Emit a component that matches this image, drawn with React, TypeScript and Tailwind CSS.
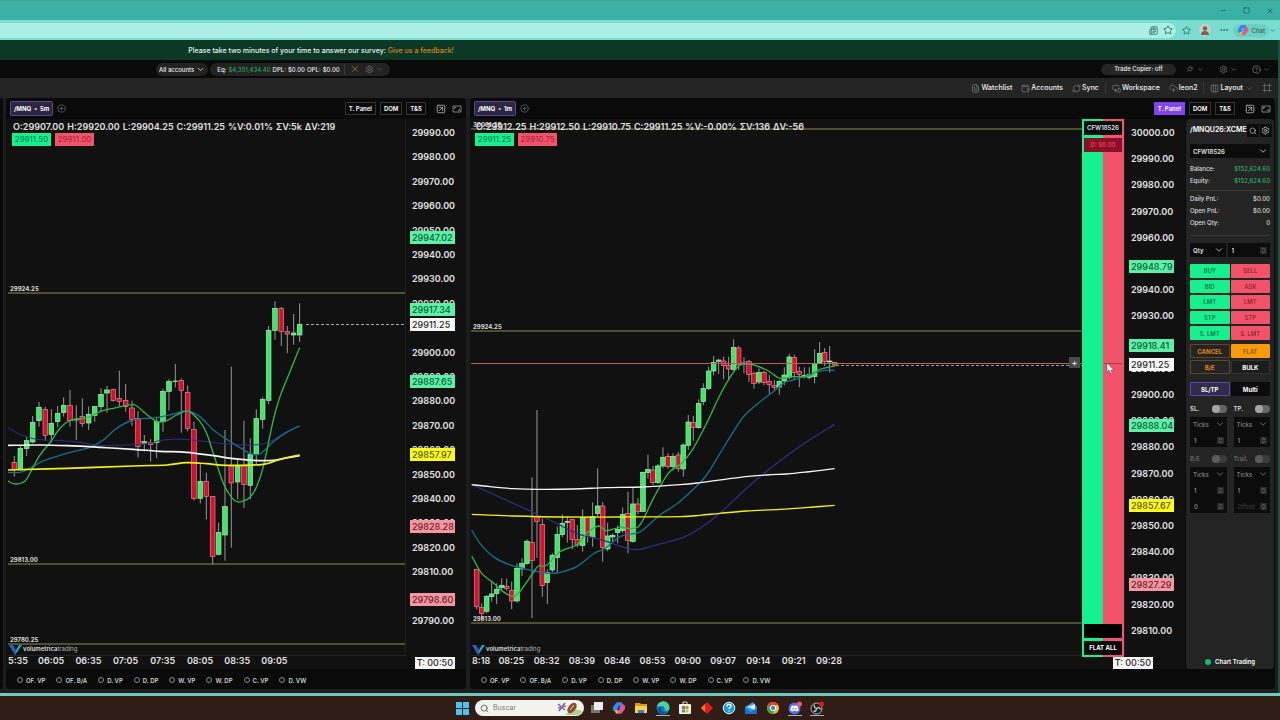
import type { ReactNode } from 'react';
import {
  ChevronDown,
  ChevronsUpDown,
  CircleHelp,
  CirclePlus,
  CloudUpload,
  Columns3,
  Ellipsis,
  FileText,
  Frame,
  Minus,
  MonitorSmartphone,
  Newspaper,
  Plug,
  RefreshCw,
  Search,
  Settings,
  Square,
  SquareArrowUpRight,
  Star,
  Wallet,
  X,
} from 'lucide-react';
import { FaDiscord } from 'react-icons/fa6';

// x, high, body top, body bottom, low, up (1) or down (0)
type Candle = [number, number, number, number, number, 0 | 1];
type Point = [number, number];
type Tag = { y: number; text: string; tone: keyof typeof tones };

const tones = {
  green: { fill: '#5df0a6', text: '#0b5c38' },
  white: { fill: '#f7f7f7', text: '#2a2a2a' },
  yellow: { fill: '#fbfb1c', text: '#55550a' },
  pink: { fill: '#f597a3', text: '#6e1a26' },
};

const candles5m: Candle[] = [
  [43, 528, 547, 569, 590, 0],
  [61, 498, 505, 569, 572, 1],
  [80, 470, 482, 506, 528, 1],
  [98, 408, 427, 486, 490, 1],
  [117, 366, 382, 422, 440, 1],
  [136, 380, 388, 466, 482, 0],
  [154, 388, 430, 464, 488, 1],
  [173, 378, 400, 425, 442, 1],
  [191, 352, 376, 398, 410, 1],
  [210, 330, 376, 422, 440, 0],
  [229, 376, 417, 420, 480, 1],
  [247, 355, 409, 431, 440, 0],
  [266, 380, 403, 429, 450, 1],
  [284, 378, 380, 406, 425, 1],
  [303, 325, 343, 380, 395, 1],
  [321, 318, 330, 339, 398, 1],
  [340, 326, 328, 361, 365, 0],
  [358, 272, 356, 364, 380, 0],
  [377, 312, 361, 380, 395, 0],
  [396, 362, 384, 418, 437, 0],
  [414, 394, 416, 499, 533, 0],
  [433, 465, 485, 491, 515, 1],
  [452, 478, 487, 493, 545, 0],
  [470, 410, 424, 488, 534, 1],
  [489, 326, 334, 425, 455, 1],
  [507, 298, 304, 334, 392, 1],
  [526, 252, 303, 305, 322, 1],
  [544, 296, 301, 331, 458, 0],
  [563, 316, 338, 445, 454, 0],
  [582, 425, 449, 655, 662, 0],
  [601, 550, 604, 655, 670, 1],
  [619, 578, 604, 649, 718, 0],
  [638, 649, 649, 829, 853, 0],
  [656, 728, 758, 823, 826, 1],
  [675, 450, 680, 765, 842, 1],
  [694, 260, 558, 609, 803, 0],
  [713, 538, 558, 606, 657, 1],
  [732, 422, 558, 613, 684, 0],
  [751, 475, 523, 616, 658, 1],
  [769, 388, 416, 523, 553, 1],
  [788, 352, 358, 418, 446, 1],
  [806, 138, 151, 361, 373, 1],
  [825, 64, 85, 151, 179, 1],
  [844, 81, 86, 154, 198, 0],
  [862, 138, 155, 162, 219, 0],
  [881, 102, 159, 165, 194, 1],
  [899, 70, 133, 165, 186, 1],
];

const candles1m: Candle[] = [
  [50, 748, 748, 860, 868, 0],
  [65, 850, 862, 880, 904, 0],
  [80, 825, 829, 874, 880, 1],
  [95, 785, 822, 830, 845, 1],
  [110, 790, 808, 821, 852, 1],
  [125, 775, 796, 803, 812, 1],
  [140, 776, 799, 806, 812, 0],
  [155, 785, 811, 843, 868, 0],
  [171, 730, 745, 843, 848, 1],
  [186, 715, 730, 747, 768, 1],
  [201, 658, 664, 731, 734, 1],
  [216, 472, 668, 721, 894, 0],
  [231, 270, 590, 604, 714, 0],
  [247, 595, 613, 797, 830, 0],
  [262, 748, 757, 788, 852, 1],
  [277, 700, 706, 750, 757, 1],
  [292, 620, 644, 713, 756, 1],
  [307, 583, 610, 644, 652, 1],
  [322, 590, 604, 607, 668, 1],
  [337, 598, 599, 658, 687, 0],
  [352, 615, 659, 675, 682, 0],
  [368, 568, 592, 677, 695, 1],
  [383, 588, 593, 648, 668, 0],
  [398, 547, 590, 653, 680, 1],
  [413, 445, 558, 581, 590, 1],
  [428, 547, 558, 683, 725, 0],
  [443, 608, 648, 687, 694, 1],
  [458, 640, 646, 651, 668, 1],
  [473, 616, 628, 638, 670, 1],
  [488, 563, 583, 632, 638, 1],
  [504, 515, 581, 661, 700, 0],
  [519, 502, 552, 664, 668, 1],
  [534, 535, 552, 574, 583, 0],
  [549, 455, 457, 574, 576, 1],
  [564, 404, 448, 458, 476, 1],
  [579, 438, 450, 488, 495, 0],
  [594, 432, 438, 488, 492, 1],
  [609, 382, 412, 438, 445, 1],
  [624, 400, 409, 440, 446, 0],
  [639, 400, 409, 440, 452, 1],
  [655, 396, 405, 446, 455, 0],
  [670, 370, 375, 447, 470, 1],
  [685, 285, 306, 376, 390, 1],
  [700, 288, 307, 323, 362, 0],
  [716, 238, 250, 323, 326, 1],
  [730, 190, 206, 245, 256, 1],
  [746, 140, 153, 205, 210, 1],
  [761, 108, 127, 153, 165, 1],
  [776, 118, 120, 124, 162, 1],
  [791, 110, 123, 136, 178, 0],
  [806, 110, 136, 147, 182, 0],
  [821, 58, 82, 149, 152, 1],
  [836, 78, 84, 135, 150, 0],
  [852, 112, 129, 132, 160, 1],
  [867, 120, 124, 163, 186, 0],
  [882, 155, 160, 190, 206, 0],
  [897, 145, 158, 186, 192, 1],
  [912, 152, 157, 187, 196, 0],
  [928, 165, 184, 194, 225, 0],
  [943, 180, 196, 202, 210, 0],
  [958, 180, 184, 201, 224, 1],
  [973, 142, 165, 183, 196, 1],
  [988, 102, 111, 172, 178, 1],
  [1003, 104, 112, 157, 178, 0],
  [1018, 140, 154, 163, 202, 0],
  [1033, 142, 166, 170, 176, 1],
  [1048, 142, 164, 172, 178, 1],
  [1064, 88, 130, 170, 190, 1],
  [1079, 66, 100, 129, 132, 1],
  [1094, 84, 98, 124, 138, 0],
  [1109, 78, 123, 126, 158, 1],
  [1124, 126, 127, 135, 140, 0],
];

type Series = { color: string; width: number; points: Point[] };

const series5m: Series[] = [
  { color: '#302d85', width: 3, points: [[24, 443], [60, 463], [110, 478], [180, 482], [240, 487], [300, 496], [380, 495], [440, 491], [490, 480], [550, 478], [620, 485], [680, 492], [760, 495], [810, 485], [860, 455], [899, 437]] },
  { color: '#15718a', width: 4, points: [[24, 577], [60, 577], [95, 562], [130, 543], [200, 520], [270, 502], [310, 480], [350, 445], [400, 420], [470, 413], [520, 402], [560, 393], [600, 410], [640, 450], [680, 478], [720, 503], [750, 520], [780, 522], [820, 485], [860, 457], [899, 438]] },
  { color: '#2fb84a', width: 4, points: [[24, 603], [45, 612], [75, 603], [95, 570], [120, 525], [150, 488], [180, 445], [210, 422], [265, 412], [300, 395], [340, 385], [400, 374], [430, 395], [470, 425], [500, 422], [530, 405], [565, 393], [600, 425], [620, 460], [640, 520], [670, 610], [695, 653], [713, 666], [730, 663], [750, 652], [770, 620], [790, 560], [820, 420], [840, 350], [870, 275], [899, 203]] },
  { color: '#f5f5f5', width: 5, points: [[24, 496], [120, 495], [200, 497], [300, 502], [400, 508], [480, 514], [560, 517], [640, 527], [700, 536], [760, 541], [820, 541], [860, 534], [899, 527]] },
  { color: '#f4f410', width: 5, points: [[24, 570], [200, 565], [400, 558], [500, 555], [560, 548], [620, 551], [680, 556], [790, 553], [840, 538], [899, 525]] },
];

const series1m: Series[] = [
  { color: '#302d78', width: 4, points: [[35, 494], [120, 532], [215, 575], [280, 605], [350, 640], [430, 661], [500, 685], [540, 688], [580, 677], [670, 652], [720, 625], [780, 580], [860, 505], [940, 438], [1030, 372], [1124, 313]] },
  { color: '#15718a', width: 4, points: [[35, 630], [60, 670], [100, 710], [150, 735], [210, 750], [270, 760], [300, 757], [350, 740], [400, 702], [440, 682], [480, 650], [535, 638], [560, 620], [600, 585], [650, 552], [700, 508], [740, 465], [780, 400], [830, 320], [855, 285], [900, 245], [940, 215], [970, 190], [1000, 180], [1040, 168], [1065, 157], [1095, 151], [1124, 151]] },
  { color: '#2fb84a', width: 4, points: [[35, 708], [65, 760], [100, 788], [125, 812], [155, 828], [175, 820], [215, 765], [235, 738], [260, 736], [300, 695], [350, 675], [380, 640], [415, 618], [440, 632], [480, 622], [535, 620], [580, 535], [625, 460], [665, 430], [700, 385], [740, 310], [780, 225], [815, 165], [840, 135], [870, 132], [920, 150], [960, 175], [1000, 170], [1050, 168], [1075, 150], [1124, 138]] },
  { color: '#f5f5f5', width: 4, points: [[35, 494], [90, 500], [160, 506], [240, 508], [340, 507], [440, 503], [540, 501], [660, 494], [720, 488], [840, 472], [920, 465], [980, 462], [1040, 456], [1124, 446]] },
  { color: '#f4f410', width: 4, points: [[35, 583], [160, 588], [300, 591], [480, 591], [660, 590], [720, 586], [780, 580], [860, 573], [960, 568], [1060, 561], [1124, 556]] },
];

const prices = (from: number, count: number) =>
  Array.from({ length: count }, (_, i) => `${from - i * 10}.00`);

const smooth = (p: Point[]) => {
  let d = `M${p[0][0]} ${p[0][1]}`;
  for (let i = 0; i < p.length - 1; i++) {
    const a = p[i - 1] ?? p[i];
    const b = p[i];
    const c = p[i + 1];
    const e = p[i + 2] ?? c;
    d += `C${b[0] + (c[0] - a[0]) / 6} ${b[1] + (c[1] - a[1]) / 6} ${c[0] - (e[0] - b[0]) / 6} ${c[1] - (e[1] - b[1]) / 6} ${c[0]} ${c[1]}`;
  }
  return d;
};

const Candles = ({ data, series }: { data: Candle[]; series: Series[] }) => (
  <>
    {data.map(([x, high, top, bottom, low, up]) => (
      <g key={x}>
        <path d={`M${x} ${high}V${low}`} stroke="#999" strokeWidth="3" />
        <rect
          x={x - 7}
          y={top}
          width="14"
          height={Math.max(bottom - top, 2)}
          fill={up ? '#3fe768' : '#d8102f'}
          stroke={up ? '#a5efb5' : '#e58a98'}
          strokeWidth="2"
        />
      </g>
    ))}
    {series.map((s) => (
      <path
        key={s.color}
        d={smooth(s.points)}
        fill="none"
        stroke={s.color}
        strokeWidth={s.width}
      />
    ))}
  </>
);

const Level = ({ y, label }: { y: number; label: string }) => (
  <g>
    <line x1="0" x2="100%" y1={y} y2={y} stroke="#8a8f4c" />
    <text x="2" y={y - 2} fontSize="6" fontWeight="700" fill="#d8d8d8">
      {label}
    </text>
  </g>
);

const Watermark = () => (
  <g>
    <path d="M1 526h4l3 5-1 5z" fill="#2c5fc4" />
    <path d="M7 536l1-5 3-5h3z" fill="#2fa6bd" />
    <text x="15" y="532" fontSize="6" fill="#b5b5b5">
      <tspan fontWeight="600" fill="#dcdcdc">
        volumetrica
      </tspan>
      trading
    </text>
  </g>
);

const PriceAxis = ({
  labels,
  step,
  tags,
}: {
  labels: string[];
  step: number;
  tags: Tag[];
}) => (
  <svg className="h-[537px] w-[61px] shrink-0 border-l border-[#202020]">
    {labels.map((label, i) => (
      <text
        key={label}
        x="6"
        y={17 + i * step}
        fontSize="9"
        fontWeight="600"
        fill="#e2e2e2"
      >
        {label}
      </text>
    ))}
    {tags.map((tag) => (
      <g key={tag.text}>
        <rect x="4" y={tag.y} width="45" height="13" fill={tones[tag.tone].fill} />
        <text x="6" y={tag.y + 10} fontSize="9" fontWeight="500" fill={tones[tag.tone].text}>
          {tag.text}
        </text>
      </g>
    ))}
  </svg>
);

const TimeAxis = ({
  labels,
  start,
  step,
  right,
}: {
  labels: string[];
  start: number;
  step: number;
  right: string;
}) => (
  <div className={`relative flex h-[13px] items-center justify-end ${right}`}>
    <svg className="absolute inset-0 h-full w-full">
      {labels.map((label, i) => (
        <text
          key={label}
          x={i === 0 ? 2 : start + i * step}
          y="8"
          fontSize="9"
          fontWeight="600"
          textAnchor={i === 0 ? 'start' : 'middle'}
          fill="#e2e2e2"
        >
          {label}
        </text>
      ))}
    </svg>
    <span className="relative bg-[#f7f7f7] px-[2px] text-[9px] leading-[12px] font-medium text-[#2a2a2a]">
      T: 00:50
    </span>
  </div>
);

const HeaderButton = ({ active, children }: { active?: boolean; children: ReactNode }) => (
  <button
    type="button"
    className={`h-[13px] border px-[3px] text-[6px] leading-none font-semibold text-white ${
      active ? 'border-[#8445f0] bg-[#8445f0]' : 'border-[#333] bg-[#0a0a0a]'
    }`}
  >
    {children}
  </button>
);

const overlays = ['OF. VP', 'OF. B/A', 'D. VP', 'D. DP', 'W. VP', 'W. DP', 'C. VP', 'D. VW'];

const ChartPanel = ({
  frame,
  panelActive,
  className,
  children,
  side,
}: {
  frame: string;
  panelActive?: boolean;
  className: string;
  children: ReactNode;
  side?: ReactNode;
}) => (
  <section className={`flex flex-col overflow-hidden rounded-sm bg-[#0a0a0a] ${className}`}>
    <header className="flex h-[21px] shrink-0 items-center pr-1 pl-1">
      <button
        type="button"
        className="flex h-[15px] items-center gap-[3px] rounded-[2px] border border-[#5a4796] bg-[#2b2740] px-[3px] text-[6px] font-bold text-white"
      >
        /MNQ <span>•</span> {frame}
      </button>
      <button type="button" aria-label="Add chart" className="ml-1 text-[#666]">
        <CirclePlus size={9} />
      </button>
      <div className="ml-auto flex items-center gap-1">
        <HeaderButton active={panelActive}>T. Panel</HeaderButton>
        <HeaderButton>DOM</HeaderButton>
        <HeaderButton>T&amp;S</HeaderButton>
        <button type="button" aria-label="Open in window" className="ml-[6px] text-[#b5b5b5]">
          <SquareArrowUpRight size={10} />
        </button>
        <button type="button" aria-label="Resize" className="ml-[2px] text-[#999]">
          <svg width="10" height="8" viewBox="0 0 10 8" fill="none" stroke="currentColor">
            <path d="M1 1h8v6H1z" strokeWidth=".8" />
            <path d="M2.500 4V2.500H4M7.500 4v1.500H6" strokeWidth=".8" />
          </svg>
        </button>
      </div>
    </header>
    <div className="flex flex-1">
      <div className="flex min-w-0 flex-1 flex-col bg-[#111]">{children}</div>
      {side}
    </div>
    <footer className="flex h-5 items-center gap-[11px] pt-[2px] pl-[11px]">
      {overlays.map((name) => (
        <label
          key={name}
          className="flex items-center gap-[3px] text-[6px] font-semibold whitespace-nowrap text-[#d0d0d0]"
        >
          <input
            type="radio"
            className="size-[6px] appearance-none rounded-full border border-[#8a8a8a]"
          />
          {name}
        </label>
      ))}
    </footer>
  </section>
);

const Quote = ({ ohlc, bid, ask }: { ohlc: string; bid: string; ask: string }) => (
  <div className="absolute top-[2px] left-[5px] whitespace-nowrap">
    <p className="flex gap-[3px] text-[9px] leading-[12px] font-semibold text-[#e2e2e2]">
      {ohlc.split(' ').map((part) => (
        <span key={part}>{part}</span>
      ))}
    </p>
    <div className="-ml-px flex gap-1 text-[8px] leading-[13px]">
      <span className="w-[39px] bg-[#17f08e] text-center text-[#0b7a4a]">{bid}</span>
      <span className="w-[39px] bg-[#f2536a] text-center text-[#a3233a]">{ask}</span>
    </div>
  </div>
);

const Ladder = () => (
  <div className="flex h-[538px] w-[42px] shrink-0 flex-col gap-[3px] bg-linear-to-r from-[#17f08e] from-50% to-[#f2536a] to-50% p-[2px] text-center text-[6px] leading-[14px] font-semibold">
    <span className="bg-[#0a0a0a] text-[#d8e2ea]">CFW18526</span>
    <span className="bg-[#8a0f28] text-[#e0405c]">D: $0.00</span>
    <div className="relative flex-1">
      <div className="absolute top-[208px] right-0 left-[20px] border-t border-[#a83a4c]" />
      <svg className="absolute top-[208px] left-[22px]" width="8" height="11" viewBox="0 0 8 11">
        <path d="M1 0v9l2-2 2 4 1-1-1-3h3z" fill="#fff" stroke="#444" strokeWidth=".5" />
      </svg>
    </div>
    <span className="h-[14px] bg-black" />
    <button type="button" className="h-[14px] bg-[#0a0a0a] font-bold text-white">
      FLAT ALL
    </button>
  </div>
);

const Field = ({
  label,
  value,
  muted,
  placeholder,
}: {
  label: string;
  value?: string;
  muted?: boolean;
  placeholder?: string;
}) => (
  <div className="flex h-[14px] min-w-0 flex-1 items-center bg-[#0c0c0c] pr-[3px] pl-1">
    <input
      aria-label={label}
      defaultValue={value}
      placeholder={placeholder}
      className={`w-full min-w-0 text-[6px] font-medium outline-none placeholder:text-[#3a3a3a] ${
        muted ? 'text-[#9a9a9a]' : 'text-white'
      }`}
    />
    <ChevronsUpDown size={7} className="shrink-0 bg-[#2a2a2a] text-[#999]" />
  </div>
);

const Picker = ({ label, value, muted }: { label: string; value: string; muted?: boolean }) => (
  <div className="relative min-w-0 flex-1">
    <select
      aria-label={label}
      className={`block h-[14px] w-full appearance-none bg-[#0c0c0c] pl-[3px] text-[6px] font-semibold ${
        muted ? 'text-[#777]' : 'text-[#e5e5e5]'
      }`}
    >
      <option>{value}</option>
    </select>
    <ChevronDown
      size={10}
      className={`absolute top-[2px] right-[2px] ${muted ? 'text-[#777]' : 'text-[#ccc]'}`}
    />
  </div>
);

const Toggle = ({ label, dim }: { label: string; dim?: boolean }) => (
  <label
    className={`flex flex-1 items-center justify-between text-[6px] leading-[11px] font-semibold ${
      dim ? 'text-[#666]' : 'text-[#ddd]'
    }`}
  >
    {label}
    <span className={`flex h-2 w-[15px] rounded-full ${dim ? 'bg-[#3a3a3a]' : 'bg-[#666]'}`}>
      <input
        type="checkbox"
        className={`size-2 appearance-none rounded-full ${dim ? 'bg-[#5a5a5a]' : 'bg-[#a5a5a5]'}`}
      />
    </span>
  </label>
);

const Line = ({ name, value, money }: { name: string; value: string; money?: boolean }) => (
  <div className="flex justify-between text-[6px] leading-[12px] font-medium text-[#ddd]">
    <span>{name}</span>
    <span className={money ? 'text-[#2fb36c]' : ''}>{value}</span>
  </div>
);

const orderRows = [
  ['BUY', 'SELL'],
  ['BID', 'ASK'],
  ['LMT', 'LMT'],
  ['STP', 'STP'],
  ['S. LMT', 'S. LMT'],
];

const TradePanel = () => (
  <aside className="mr-px ml-px flex w-[88px] shrink-0 flex-col overflow-hidden rounded-sm bg-[#242424] px-1 pt-[5px]">
    <div className="flex items-center justify-between">
      <span className="text-[7px] font-semibold whitespace-nowrap text-white">/MNQU26:XCME</span>
      <div className="flex gap-px">
        <button
          type="button"
          aria-label="Search symbol"
          className="flex h-[13px] w-[12px] items-center justify-center bg-[#0c0c0c] text-[#ccc]"
        >
          <Search size={8} />
        </button>
        <button
          type="button"
          aria-label="Panel settings"
          className="flex h-[13px] w-[12px] items-center justify-center bg-[#0c0c0c] text-[#ccc]"
        >
          <Settings size={9} />
        </button>
      </div>
    </div>
    <div className="mt-[7px] flex">
      <Picker label="Account" value="CFW18526" />
    </div>
    <div className="mt-[5px] border-b border-[#3a3a3a] pb-[3px]">
      <Line name="Balance:" value="$152,624.60" money />
      <Line name="Equity:" value="$152,624.60" money />
    </div>
    <div className="mt-[2px] border-b border-[#3a3a3a] pb-[6px]">
      <Line name="Daily PnL:" value="$0.00" />
      <Line name="Open PnL:" value="$0.00" />
      <Line name="Open Qty:" value="0" />
    </div>
    <div className="mt-[7px] flex gap-[2px]">
      <Picker label="Quantity type" value="Qty" />
      <Field label="Quantity" value="1" />
    </div>
    <div className="mt-[7px] grid h-[76px] grid-cols-2 grid-rows-5 gap-x-px gap-y-[2px] text-[6px] font-medium">
      {orderRows.flatMap(([buy, sell], i) => [
        <button key={`b${i}`} type="button" className="rounded-[1px] bg-[#17f08e] text-[#0b6b42]">
          {buy}
        </button>,
        <button key={`s${i}`} type="button" className="rounded-[1px] bg-[#f2536a] text-[#8c1c30]">
          {sell}
        </button>,
      ])}
    </div>
    <div className="mt-1 grid grid-cols-2 gap-x-px gap-y-[2px] text-[6px] font-bold *:h-[14px] *:rounded-[1px] *:border">
      <button type="button" className="border-[#5a4a26] text-[#e08a1a]">
        CANCEL
      </button>
      <button type="button" className="border-[#f99c0b] bg-[#f99c0b] font-medium text-[#7a4a00]">
        FLAT
      </button>
      <button type="button" className="border-[#5a4a26] text-[#e08a1a]">
        B/E
      </button>
      <button type="button" className="border-[#333] bg-[#1c1c1c] text-white">
        BULK
      </button>
    </div>
    <div className="mt-[8px] grid grid-cols-2 gap-x-px text-[6px] font-bold text-white *:h-[14px]">
      <button type="button" className="rounded-[1px] border border-[#5b46ad] bg-[#322c4a]">
        SL/TP
      </button>
      <button type="button" className="bg-[#0c0c0c]">
        Multi
      </button>
    </div>
    <div className="mt-[7px] flex gap-[7px]">
      <Toggle label="SL." />
      <Toggle label="TP." />
    </div>
    <div className="mt-[3px] grid grid-cols-2 gap-x-[7px] *:flex *:flex-col *:gap-[2px] *:bg-[#0c0c0c]">
      <div>
        <div className="flex">
          <Picker label="SL unit" value="Ticks" muted />
        </div>
        <div className="flex">
          <Field label="SL size" value="1" muted />
        </div>
      </div>
      <div>
        <div className="flex">
          <Picker label="TP unit" value="Ticks" muted />
        </div>
        <div className="flex">
          <Field label="TP size" value="1" muted />
        </div>
      </div>
    </div>
    <div className="mt-[6px] flex gap-[7px]">
      <Toggle label="B/E" dim />
      <Toggle label="Trail." dim />
    </div>
    <div className="mt-[3px] grid grid-cols-2 gap-x-[7px] *:flex *:flex-col *:gap-[2px] *:bg-[#0c0c0c]">
      <div>
        <div className="flex">
          <Picker label="Break-even unit" value="Ticks" muted />
        </div>
        <div className="flex">
          <Field label="Break-even trigger" value="1" muted />
        </div>
        <div className="flex">
          <Field label="Break-even offset" value="0" muted />
        </div>
      </div>
      <div>
        <div className="flex">
          <Picker label="Trail unit" value="Ticks" muted />
        </div>
        <div className="flex">
          <Field label="Trail size" value="1" muted />
        </div>
        <div className="flex">
          <Field label="Trail offset" placeholder="Offset" muted />
        </div>
      </div>
    </div>
    <p className="mt-auto flex items-center justify-center gap-1 pb-[3px] text-[6px] leading-[8px] font-semibold text-white">
      <span className="size-[6px] rounded-full bg-[#14b877]" />
      Chart Trading
    </p>
  </aside>
);

const Copilot = ({ size }: { size: number }) => (
  <svg width={size} height={size} viewBox="0 0 12 12">
    <path d="M4 1h4l1 3H6L4 9H2Q0 8 1 5z" fill="#2a8df0" />
    <path d="M8 1q1 0 1.500 3L8 7H6l1-3z" fill="#5b6cf5" />
    <path d="M8 11H4L3 8h3l2-5h2q2 1 1 4z" fill="#e0559c" />
    <path d="M4 11q-1 0-1.500-3h3L5 10z" fill="#f5b62e" />
  </svg>
);

const BrowserBar = () => (
  <>
    <div className="flex h-5 items-center justify-end gap-4 border-t border-[#4c9c90] bg-[#3bb0a5] pr-[6px] text-[#174f49]">
      <button type="button" aria-label="Minimize">
        <Minus size={7} />
      </button>
      <button type="button" aria-label="Maximize">
        <Square size={7} />
      </button>
      <button type="button" aria-label="Close">
        <X size={8} />
      </button>
    </div>
    <div className="flex h-5 items-center bg-[#7addcf] pr-1 text-[#24665e]">
      <div className="flex h-[15px] flex-1 items-center justify-end gap-[5px] rounded-r-full bg-[#abeee5] pr-[3px]">
        <Newspaper size={9} />
        <Star size={10} />
      </div>
      <div className="flex items-center gap-2 pl-[6px]">
        <Star size={9} />
        <svg width="12" height="12" viewBox="0 0 12 12">
          <circle cx="6" cy="6" r="6" fill="#c5cfcc" />
          <circle cx="6" cy="4.5" r="2.3" fill="#8a5c4e" />
          <path d="M2 11a4 4 0 0 1 8 0z" fill="#8d5750" />
        </svg>
        <Ellipsis size={10} />
      </div>
      <button
        type="button"
        className="ml-1 flex h-[13px] items-center gap-[3px] rounded-full bg-[#6ed0c2] px-1 text-[6px] font-medium"
      >
        <Copilot size={12} />
        Chat
      </button>
      <ChevronDown size={7} />
    </div>
  </>
);

const Tool = ({ icon, children }: { icon: ReactNode; children: ReactNode }) => (
  <button type="button" className="flex items-center gap-px text-[#777]">
    {icon}
    <span className="text-[7px] font-medium text-[#f0f0f0]">{children}</span>
  </button>
);

const TopBars = () => (
  <>
    <div className="h-5 bg-[#0c3826] text-center text-[7px] leading-5 font-medium text-[#e8f5ee]">
      <div className="pt-px pr-[636px]">
        Please take two minutes of your time to answer our survey:{' '}
        <a href="#survey" className="text-[#d98220]">
          Give us a feedback!
        </a>
      </div>
    </div>
    <div className="flex h-[18px] items-center bg-[#0a0a0a] pr-[8px] pl-[156px] text-[6px] font-medium text-[#f0f0f0]">
      <button type="button" className="flex h-[13px] items-center gap-[2px] rounded-full bg-[#222] px-[3px]">
        All accounts <ChevronDown size={9} />
      </button>
      <div className="ml-[2px] flex h-[13px] items-center gap-[2px] rounded-full bg-[#222] px-[7px]">
        <span>Eq:</span>
        <span className="text-[#25a862]">$4,351,434.40</span>
        <span>DPL:</span>
        <span>$0.00</span>
        <span>OPL:</span>
        <span>$0.00</span>
        <span className="ml-[2px] h-[11px] border-l border-[#3a3a3a]" />
        <button type="button" aria-label="Close positions" className="mx-[3px] text-[#b0761f]">
          <X size={10} />
        </button>
        <button type="button" aria-label="Equity settings" className="flex items-center gap-[2px] text-[#777]">
          <Settings size={9} />
          <ChevronDown size={7} />
        </button>
      </div>
      <button type="button" className="ml-auto h-[11px] w-[75px] rounded-full bg-[#252525] leading-none">
        Trade Copier: off
      </button>
      <div className="ml-[10px] flex gap-[15px] text-[#777]">
        <button type="button" aria-label="Connections" className="flex items-center gap-[3px]">
          <Plug size={8} className="rotate-45" />
          <ChevronDown size={7} />
        </button>
        <button type="button" aria-label="Settings" className="flex items-center gap-[2px]">
          <Settings size={9} />
          <ChevronDown size={7} />
        </button>
        <button type="button" aria-label="Help" className="flex items-center gap-[2px]">
          <CircleHelp size={9} />
          <ChevronDown size={7} />
        </button>
      </div>
    </div>
    <nav className="flex h-5 items-center justify-end gap-[9px] bg-[#242424] pr-[6px]">
      <Tool icon={<FileText size={9} />}>Watchlist</Tool>
      <Tool icon={<Wallet size={9} />}>Accounts</Tool>
      <Tool icon={<RefreshCw size={9} />}>Sync</Tool>
      <span className="-mx-[3px] h-[11px] border-l border-[#3a3a3a]" />
      <Tool icon={<MonitorSmartphone size={9} />}>Workspace</Tool>
      <Tool icon={<CloudUpload size={9} />}>leon2</Tool>
      <span className="-mx-[3px] h-[11px] border-l border-[#3a3a3a]" />
      <div className="flex items-center gap-[3px]">
        <Tool icon={<Columns3 size={9} />}>Layout</Tool>
        <ChevronDown size={7} className="text-[#777]" />
      </div>
      <button type="button" aria-label="Full screen" className="text-[#666]">
        <Frame size={10} />
      </button>
    </nav>
  </>
);

const taskIcons: { name: string; art: ReactNode; open?: boolean }[] = [
  {
    name: 'Task view',
    art: (
      <>
        <rect x="1" y="4" width="9" height="8" fill="#777" />
        <rect x="4" y="1" width="9" height="8" fill="#ececec" />
      </>
    ),
  },
  { name: 'Copilot', art: <Copilot size={14} /> },
  {
    name: 'File Explorer',
    art: (
      <>
        <path d="M1 2h5l1 1h6v9H1z" fill="#d99a1b" />
        <path d="M1 5h12v7H1z" fill="#fbd04f" />
        <path d="M4 9h6v3H4z" fill="#2f83d6" />
      </>
    ),
  },
  {
    name: 'Edge',
    open: true,
    art: (
      <>
        <circle cx="7" cy="7" r="6.500" fill="#1675c8" />
        <path d="M1 6a6 6 0 0 1 12.500 1c0 3-4 3.500-5 2 1-2-1-4-3-4S1 6 1 6z" fill="#45d3a0" />
        <path d="M5 6c-1 3 1 6 6 5-3 3-9 2-9-3 0-1 1-2 3-2z" fill="#0d4f9c" />
      </>
    ),
  },
  {
    name: 'Store',
    art: (
      <>
        <path d="M5 3V1h4v2" fill="none" stroke="#ddd" />
        <rect x="1" y="3" width="12" height="10" rx="1" fill="#f2f2f2" />
        <path d="M4 5h3v3H4z" fill="#e5502c" />
        <path d="M7.500 5h3v3h-3z" fill="#7bb51e" />
        <path d="M4 8.500h3v3H4z" fill="#1e9de2" />
        <path d="M7.500 8.500h3v3h-3z" fill="#f6b61b" />
      </>
    ),
  },
  {
    name: 'AnyDesk',
    art: (
      <>
        <path d="M7 1l6 6-6 6-6-6z" fill="#e01c1c" />
        <path d="M1 7l4-4v8z" fill="#f5762a" />
      </>
    ),
  },
  {
    name: 'Get help',
    art: (
      <>
        <circle cx="7" cy="7" r="5.800" fill="#1f9bd0" stroke="#e7f5fb" />
        <path d="M5 5.500c0-3 4-2.500 4-.5 0 1.500-2 1.500-2 3m0 1.500v1" fill="none" stroke="#fff" strokeWidth="1.400" />
      </>
    ),
  },
  {
    name: 'Mail',
    art: (
      <>
        <path d="M1 6l8-5 4 5v7H1z" fill="#2f9ae8" />
        <path d="M3 6l8-3v6z" fill="#d4ecfb" />
        <path d="M1 7l6 4 6-4v6H1z" fill="#1b6fc9" />
      </>
    ),
  },
  {
    name: 'Chrome',
    art: (
      <>
        <circle cx="7" cy="7" r="6" fill="#f5c02a" />
        <path d="M1.800 4a6 6 0 0 1 10.400 0H7L4.400 8.500z" fill="#e5402f" />
        <path d="M1.800 4a6 6 0 0 0 4.800 9L9.500 8.500h-5z" fill="#33a452" />
        <circle cx="7" cy="7" r="2.700" fill="#3f80ea" stroke="#fff" />
      </>
    ),
  },
  {
    name: 'Discord',
    open: true,
    art: (
      <>
        <circle cx="6.500" cy="7.500" r="6" fill="#5865f2" />
        <FaDiscord x={2} y={3} size={9} color="#fff" />
        <circle cx="11.500" cy="3" r="2.500" fill="#ee5a6c" />
      </>
    ),
  },
  {
    name: 'OBS Studio',
    open: true,
    art: (
      <>
        <circle cx="6.500" cy="7.500" r="5.500" fill="#1b1b1b" stroke="#bbb" />
        <path d="M6.500 7.500q-3-1-2-4M6.500 7.500q3-2 4 1M6.500 7.500q0 3-3 3" fill="none" stroke="#ccc" strokeWidth="1.300" />
        <circle cx="11.500" cy="3" r="2.500" fill="#e01818" />
      </>
    ),
  },
];

const Taskbar = () => (
  <div className="flex h-6 items-center justify-center bg-[#301e16]">
    <button type="button" aria-label="Start">
      <svg width="13" height="13" viewBox="0 0 13 13" fill="#4cc3f0">
        <path d="M0 0h6v6H0zM7 0h6v6H7zM0 7h6v6H0zM7 7h6v6H7z" />
      </svg>
    </button>
    <label className="ml-[6px] flex h-4 w-[109px] items-center gap-1 rounded-full bg-[#f3f3ee] pl-[5px] text-[#444]">
      <Search size={9} />
      <input
        aria-label="Buscar"
        placeholder="Buscar"
        className="w-[60px] text-[7px] outline-none placeholder:text-[#777]"
      />
      <svg width="25" height="16" viewBox="0 0 25 16">
        <path d="M8 15q8-8 17-4-1 4-6 4z" fill="#a9cf8a" />
        <path d="M1 4l7 6M8 3L2 11" stroke="#3c6fd8" strokeWidth="1.500" />
        <path d="M1 8l8-2" stroke="#e04d7a" strokeWidth="1.500" />
        <ellipse cx="15" cy="8" rx="6" ry="3.600" transform="rotate(-50 15 8)" fill="#8a4b2d" />
        <path d="M13 10l4-5" stroke="#f0e0d0" />
      </svg>
    </label>
    <div className="ml-[6px] flex gap-2">
      {taskIcons.map((icon) => (
        <button
          key={icon.name}
          type="button"
          aria-label={icon.name}
          className={`border-b pt-[1px] ${icon.open ? 'border-[#8fb9c9]' : 'border-transparent'}`}
        >
          <svg width="14" height="14" viewBox="0 0 14 14">
            {icon.art}
          </svg>
        </button>
      ))}
    </div>
  </div>
);

const App = () => (
  <div className="flex min-h-screen flex-col bg-[#1d1d1d] font-['Inter','Liberation_Sans',sans-serif]">
    <BrowserBar />
    <div className="flex flex-col border-r-2 border-[#1f4f43]">
      <TopBars />
      <main className="flex pr-[3px] pb-[4px]">
        <div className="mr-[3px] w-[3px] rounded-r-sm bg-[#0a0a0a]" />
        <ChartPanel frame="5m" className="w-[460px] shrink-0">
          <div className="flex">
            <div className="relative ml-[2px] min-w-0 flex-1 border-b border-[#222]">
              <svg className="block h-[536px] w-full">
                <Level y={174} label="29924.25" />
                <Level y={445} label="29813.00" />
                <Level y={525} label="29780.25" />
                <line x1="298" x2="100%" y1="205.500" y2="205.500" stroke="#aaa" strokeDasharray="3 2" />
                <g transform="translate(-8 161) scale(.3333)">
                  <Candles data={candles5m} series={series5m} />
                </g>
                <Watermark />
              </svg>
              <Quote
                ohlc="O:29907.00 H:29920.00 L:29904.25 C:29911.25 %V:0.01% ΣV:5k ΔV:219"
                bid="29911.50"
                ask="29911.00"
              />
            </div>
            <PriceAxis
              labels={prices(29990, 21)}
              step={24.4}
              tags={[
                { y: 112, text: '29947.02', tone: 'green' },
                { y: 184, text: '29917.34', tone: 'green' },
                { y: 199, text: '29911.25', tone: 'white' },
                { y: 256, text: '29887.65', tone: 'green' },
                { y: 329, text: '29857.97', tone: 'yellow' },
                { y: 401, text: '29828.28', tone: 'pink' },
                { y: 474, text: '29798.60', tone: 'pink' },
              ]}
            />
          </div>
          <TimeAxis
            labels={['5:35', '06:05', '06:35', '07:05', '07:35', '08:05', '08:35', '09:05']}
            start={8}
            step={37.2}
            right="pr-[11px]"
          />
        </ChartPanel>
        <ChartPanel
          frame="1m"
          panelActive
          className="ml-1 min-w-0 flex-1"
          side={<TradePanel />}
        >
          <div className="flex h-[537px]">
            <div className="relative ml-px min-w-0 flex-1 border-b border-[#222]">
              <svg className="block h-[536px] w-full">
                <Level y={10} label="30001.25" />
                <Level y={212} label="29924.25" />
                <g transform="translate(-11 201) scale(.3333)">
                  <Candles data={candles1m} series={series1m} />
                </g>
                <Level y={504} label="29813.00" />
                <line x1="0" x2="100%" y1="244.500" y2="244.500" stroke="#b5635f" />
                <line x1="365" x2="100%" y1="246.500" y2="246.500" stroke="#999" strokeDasharray="3 2" />
                <Watermark />
              </svg>
              <Quote
                ohlc="O:29912.25 H:29912.50 L:29910.75 C:29911.25 %V:-0.00% ΣV:136 ΔV:-56"
                bid="29911.25"
                ask="29910.75"
              />
              <button
                type="button"
                className="absolute top-[238px] right-[2px] size-[11px] bg-[#4a4a4a] text-[9px] leading-[10px] text-white"
              >
                +
              </button>
            </div>
            <Ladder />
            <PriceAxis
              labels={prices(30000, 20)}
              step={26.2}
              tags={[
                { y: 141, text: '29948.79', tone: 'green' },
                { y: 220, text: '29918.41', tone: 'green' },
                { y: 239, text: '29911.25', tone: 'white' },
                { y: 300, text: '29888.04', tone: 'green' },
                { y: 380, text: '29857.67', tone: 'yellow' },
                { y: 459, text: '29827.29', tone: 'pink' },
              ]}
            />
          </div>
          <TimeAxis
            labels={['8:18', '08:25', '08:32', '08:39', '08:46', '08:53', '09:00', '09:07', '09:14', '09:21', '09:28']}
            start={6}
            step={35.3}
            right="pr-[32px]"
          />
        </ChartPanel>
      </main>
    </div>
    <div className="h-[3px] bg-[#6fc9bb]" />
    <Taskbar />
  </div>
);

export default App;
